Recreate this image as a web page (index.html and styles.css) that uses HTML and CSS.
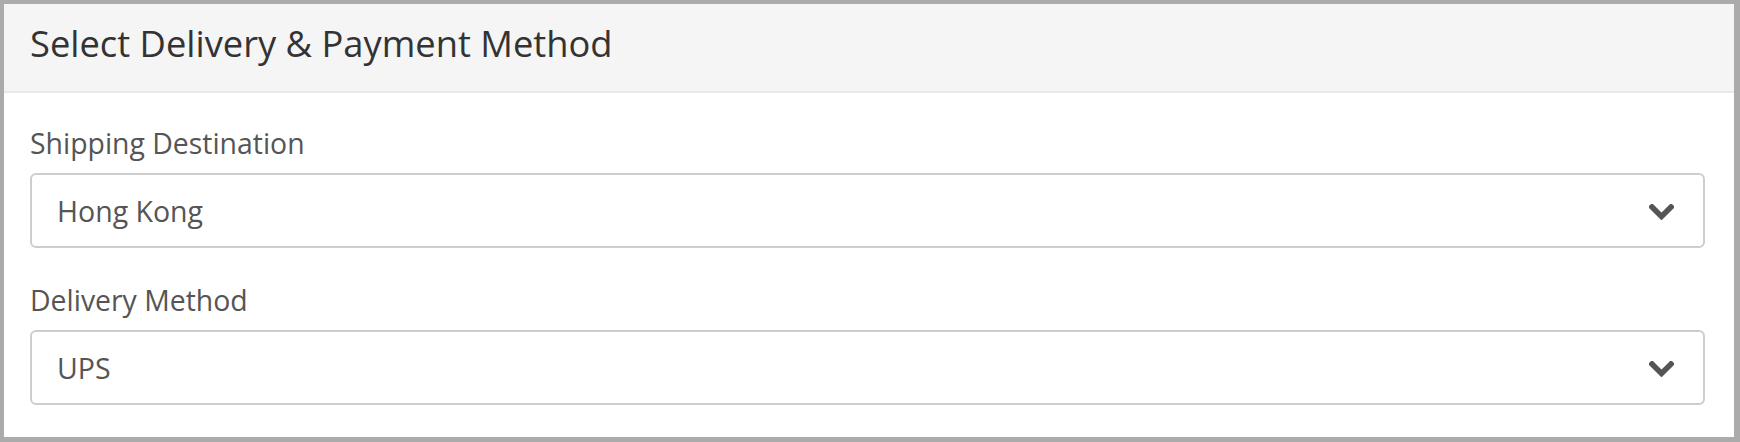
FILE: index.html
```html
<!DOCTYPE html>
<html lang="en">
<head>
<meta charset="utf-8">
<title>Select Delivery &amp; Payment Method</title>
<link rel="stylesheet" href="styles.css">
</head>
<body>
<div class="panel">
  <div class="panel-header">
    <h2 class="panel-title">Select Delivery &amp; Payment Method</h2>
  </div>
  <div class="panel-body">
    <div class="field">
      <label class="field-label">Shipping Destination</label>
      <div class="select">
        <span class="select-value">Hong Kong</span>
        <svg class="chevron" width="25" height="16" viewBox="0 0 25 16"><polyline points="3,3 12.5,12.5 22,3" fill="none" stroke="#555" stroke-width="5.5" stroke-linejoin="miter" stroke-linecap="square"/></svg>
      </div>
    </div>
    <div class="field">
      <label class="field-label">Delivery Method</label>
      <div class="select">
        <span class="select-value">UPS</span>
        <svg class="chevron" width="25" height="16" viewBox="0 0 25 16"><polyline points="3,3 12.5,12.5 22,3" fill="none" stroke="#555" stroke-width="5.5" stroke-linejoin="miter" stroke-linecap="square"/></svg>
      </div>
    </div>
  </div>
</div>
</body>
</html>
```
FILE: styles.css
```css
html, body {
  margin: 0;
  padding: 0;
  background: #fff;
}
body {
  font-family: "Open Sans", "Noto Sans", sans-serif;
}
.panel {
  box-sizing: border-box;
  height: 442px;
  border-style: solid;
  border-color: #ababab;
  border-width: 4px 6px 5px 4px;
  background: #fff;
}
.panel-header {
  box-sizing: border-box;
  height: 89px;
  background: #f5f5f5;
  border-bottom: 2px solid #e9e9e9;
  padding: 15px 26px 0;
}
.panel-title {
  margin: 0;
  font-size: 36.3px;
  font-weight: 400;
  color: #333;
  line-height: 49px;
}
.panel-body {
  padding: 31px 29px 0 26px;
}
.field {
  margin-bottom: 33px;
}
.field-label {
  display: block;
  font-size: 28.4px;
  line-height: 38px;
  color: #555;
  margin-bottom: 11px;
}
.select {
  box-sizing: border-box;
  height: 75px;
  border: 2px solid #cdcdcd;
  border-radius: 6px;
  display: flex;
  align-items: center;
  justify-content: space-between;
  padding: 0 29px 0 25px;
}
.select-value {
  font-size: 28.5px;
  color: #555;
}
.chevron {
  display: block;
  margin-top: 3px;
}
```
